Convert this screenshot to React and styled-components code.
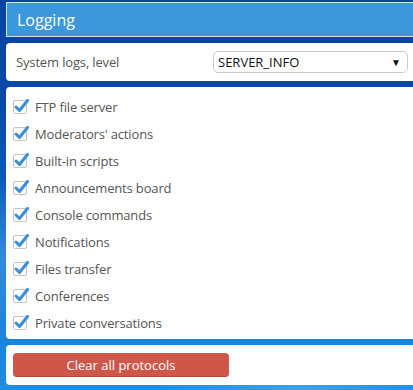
import React from 'react';
import styled, { createGlobalStyle } from 'styled-components';

const GlobalStyle = createGlobalStyle`
  html, body {
    margin: 0;
    padding: 0;
  }
  body {
    width: 413px;
    height: 390px;
    overflow: hidden;
    font-family: "Open Sans", "Noto Sans", sans-serif;
    background:
      radial-gradient(ellipse 60px 120px at 0px 260px, rgba(120, 190, 255, 0.35), transparent 70%),
      radial-gradient(ellipse 200px 60px at 300px 390px, rgba(110, 190, 250, 0.4), transparent 70%),
      linear-gradient(180deg, #0843a3 0%, #0948aa 25%, #0c5cc0 50%, #1478d6 75%, #1d8fe2 100%);
  }
`

const Page = styled.div`
  display: flex;
  flex-direction: column;
  gap: 6px;
  padding: 2px 0 0 6px;
  width: 420px;
`

const Header = styled.div`
  height: 33px;
  border: 1px solid #cfe2f3;
  background-color: #3a98db;
  display: flex;
  align-items: center;
  padding-left: 10px;
  color: #fff;
  font-size: 16px;
`

const Panel = styled.div`
  background-color: #fff;
  border-radius: 4px;
  height: ${p => p.$height}px;
  box-sizing: border-box;
  padding: ${p => p.$padding};
  display: flex;
  flex-direction: ${p => p.$column ? 'column' : 'row'};
  align-items: ${p => p.$column ? 'stretch' : 'center'};
`

const Label = styled.span`
  color: #555;
  font-size: 13px;
  letter-spacing: -0.15px;
  width: 197px;
`

const Select = styled.div`
  width: 195px;
  height: 22px;
  box-sizing: border-box;
  border: 1px solid #ccc;
  border-radius: 5px;
  display: flex;
  align-items: center;
  justify-content: space-between;
  padding: 0 6px 0 4px;
  font-size: 13px;
  color: #111;
`

const Arrow = styled.span`
  font-size: 10px;
  color: #111;
`

const Row = styled.label`
  height: 27px;
  display: flex;
  align-items: center;
  gap: 8px;
  color: #555;
  font-size: 13px;
  letter-spacing: -0.15px;
`

const Box = styled.span`
  width: 14px;
  height: 14px;
  box-sizing: border-box;
  border: 1px solid #c4c4c4;
  border-radius: 2px;
  position: relative;
  flex-shrink: 0;
`

const Tick = styled.svg`
  position: absolute;
  left: 0;
  top: -2px;
`

const Button = styled.button`
  width: 216px;
  height: 24px;
  border: none;
  border-bottom: 1px solid #b1463b;
  border-radius: 4px;
  background-color: #cf574a;
  color: #fff;
  font-family: inherit;
  font-size: 13px;
  padding: 0;
`

const items = [
  'FTP file server',
  "Moderators' actions",
  'Built-in scripts',
  'Announcements board',
  'Console commands',
  'Notifications',
  'Files transfer',
  'Conferences',
  'Private conversations',
]

const Checkbox = () => (
  <Box>
    <Tick width="15" height="14" viewBox="0 0 15 14">
      <path d="M2 8 L5.5 11.5 L13.5 1.5" fill="none" stroke="#3a8fdd" strokeWidth="3" strokeLinecap="round" strokeLinejoin="round" />
    </Tick>
  </Box>
)

export default function App() {
  return (
    <>
      <GlobalStyle />
      <Page>
        <Header>Logging</Header>
        <Panel $height={38} $padding="0 0 0 10px">
          <Label>System logs, level</Label>
          <Select>
            <span>SERVER_INFO</span>
            <Arrow>▼</Arrow>
          </Select>
        </Panel>
        <Panel $height={252} $padding="6px 0 0 7px" $column>
          {items.map(t => (
            <Row key={t}>
              <Checkbox />
              {t}
            </Row>
          ))}
        </Panel>
        <Panel $height={40} $padding="0 0 0 7px">
          <Button>Clear all protocols</Button>
        </Panel>
      </Page>
    </>
  );
}
